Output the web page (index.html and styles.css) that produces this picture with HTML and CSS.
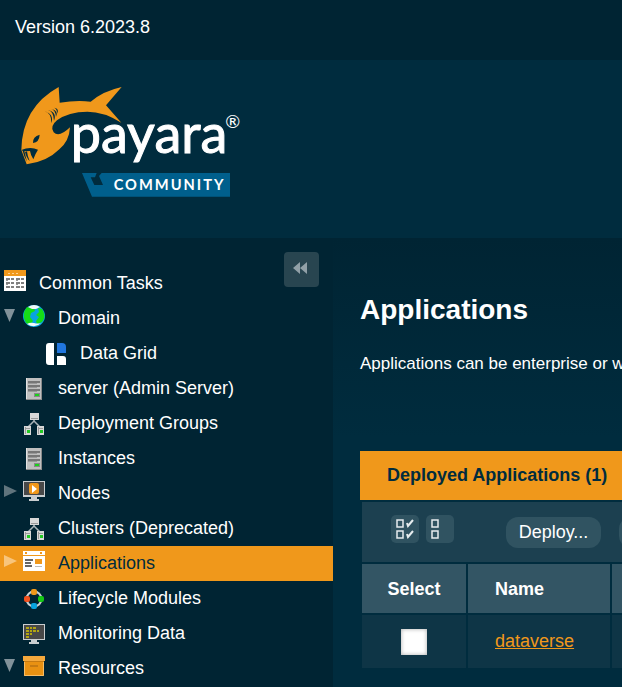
FILE: index.html
```html
<!DOCTYPE html>
<html lang="en">
<head>
<meta charset="utf-8">
<title>Payara Server Console</title>
<link rel="stylesheet" href="styles.css">
</head>
<body>
<svg class="defs" aria-hidden="true">
  <symbol id="server" viewBox="0 0 16 22">
    <path fill="#bfbfbf" d="M0 0h16v22H0z"/><path fill="#8a8a8a" d="M0 21h16v1H0zM15 0h1v22h-1z"/><path fill="#e2e2e2" d="M0 0h1v21H0z"/>
    <path stroke="#777" stroke-width="2" d="M2 4h12M2 8h12M2 12h12"/><path stroke="#999" d="M2 5.500h9M2 9.500h9M2 13.500h9"/>
    <path fill="#888" d="M8 15h6v4H8z"/><path fill="#19d219" d="M9 16h4v2H9z"/>
  </symbol>
  <symbol id="group" viewBox="0 0 20 22">
    <path fill="none" stroke="#aab4b8" stroke-width="1.500" d="M10 6v2L4 14M10 8l6 6"/>
    <path fill="#d8d8d8" d="M6 0h9v7H6zM0 13h7v9H0zM13 13h7v9h-7z"/>
    <path stroke="#999" d="M7 5.500h7M1 15.500h5M14 15.500h5M1.500 14v7M14.500 14v7"/><path fill="#22c922" d="M3 17h3v3H3zM16 17h3v3h-3z"/>
  </symbol>
  <symbol id="down" viewBox="0 0 11 13"><path fill="#81929a" d="M0 0h11L5.500 13z"/></symbol>
  <symbol id="right" viewBox="0 0 13 12"><path fill="currentColor" d="M0 0l13 6L0 12z"/></symbol>
</svg>
<header class="topbar">Version 6.2023.8</header>
<div class="brand">
  <svg class="logo" viewBox="60 42 666 342" role="img" aria-label="Payara Community">
    <path fill="#f0981b" d="M176 51L179 98Q230 90 272 95Q310 63 365 51L318 106L364 158Q312 125 262 125Q205 125 171 151Q148 170 161 187Q177 204 210 172Q208 213 178 238Q140 276 80 283L64 240Q66 112 176 51Z"/>
    <path fill="#002c3e" d="M99 219q-1-20 20-25q-1 22-20 25zM64 240q27-11 50-1q-7 10-14 29q-8-12-10-25l-17 1 8 31q-10-18-13-33z"/>
    <path fill="#002c3e" d="M75 247q5 18 14 26q-7-15-8-29zM133 124q22 4 21 36q9-28-21-36zM143 119q18 4 19 33q10-25-19-33zM153 116q14 4 15 25q9-20-15-25zM163 113q9 4 8 18q8-15-8-18z"/>
    <path fill="#005f8c" d="M246 309h44l-5 13h-13l11 23h26l-12-27 8-9h385v71H276z"/>
    <text class="wordmark" x="212" y="249">payara</text>
    <text class="reg" x="676" y="174">®</text>
    <text class="edition" x="341" y="360">COMMUNITY</text>
  </svg>
</div>
<div class="layout">
  <nav class="sidebar" aria-label="Tasks">
    <button class="collapse" type="button" aria-label="Collapse navigation"><svg width="15" height="12" viewBox="0 0 15 12"><path fill="#91a0a7" d="M7 0v12L0 6zM14 0v12L7 6z"/></svg></button>
    <ul class="tree">
      <li class="node root raised"><span class="icon"><svg width="22" height="21" viewBox="0 0 22 21"><path fill="#fff" d="M0 0h22v21H0z"/><path fill="#f0981b" d="M0 0h22v6H0z"/><path stroke="#ffd391" stroke-dasharray="2 2" d="M4 3.500h10"/><path stroke="#555" stroke-width="1.500" stroke-dasharray="4 1 3 2" d="M2 9h18M2 13h18M2 17h18"/><path stroke="#999" d="M2 10.500h2M12 10.500h2M2 14.500h2M12 14.500h2"/></svg></span><a href="#">Common Tasks</a></li>
      <li class="node raised"><span class="toggle"><svg width="11" height="13"><use href="#down"/></svg></span><span class="icon"><svg width="22" height="22" viewBox="0 0 22 22"><circle cx="11" cy="11" r="11" fill="#08a4df"/><path fill="#16dc16" d="M4 2l7 1 1 3-4 2-1 4 3 4-3 4-4-2Q-2 9 4 2zM15 3l4 1q5 7 0 13l-5 2-1-3 3-4-3-2 3-3z"/><path fill="#f1f8fa" d="M5 2q6-4 12 0l-4 2H9zM4 19q3-2 7-1t7 0q-6 6-14 1z"/></svg></span><a href="#">Domain</a></li>
      <li class="node child"><span class="icon"><svg width="20" height="22" viewBox="0 0 20 22"><path fill="#fff" d="M3 0h5v22H3q-3 0-3-3V3q0-3 3-3zM11 13h6q3 0 3 3v6h-9z"/><path fill="#2176de" d="M11 0h5q4 0 4 4v6h-9z"/></svg></span><a href="#">Data Grid</a></li>
      <li class="node leaf"><span class="icon"><svg width="16" height="22"><use href="#server"/></svg></span><a href="#">server (Admin Server)</a></li>
      <li class="node leaf"><span class="icon"><svg width="20" height="22"><use href="#group"/></svg></span><a href="#">Deployment Groups</a></li>
      <li class="node leaf"><span class="icon"><svg width="16" height="22"><use href="#server"/></svg></span><a href="#">Instances</a></li>
      <li class="node raised"><span class="toggle"><svg width="13" height="12"><use href="#right"/></svg></span><span class="icon"><svg width="22" height="20" viewBox="0 0 22 20"><path fill="#c9cdcf" d="M0 0h22v16H0zM8 16h6v2h2v2H6v-2h2z"/><path fill="#484848" d="M1 1h20v13H1z"/><path fill="#f0981b" d="M8 2h6q2 0 2 2v7q0 2-2 2H8q-2 0-2-2V4q0-2 2-2z"/><path fill="#fff" d="M9 4l5 4-5 4z"/></svg></span><a href="#">Nodes</a></li>
      <li class="node leaf"><span class="icon"><svg width="20" height="22"><use href="#group"/></svg></span><a href="#">Clusters (Deprecated)</a></li>
      <li class="node raised selected"><span class="toggle"><svg width="13" height="12"><use href="#right"/></svg></span><span class="icon"><svg width="22" height="20" viewBox="0 0 22 20"><path fill="#fff" d="M0 0h22v20H0z"/><path fill="#f0981b" d="M0 4h22v1H0zM2 1h2v2H2zM17 1h2v2h-2zM12 8h7v5h-7z"/><path stroke="#666" stroke-width="2" d="M2 9h8M2 12h6M2 15h7"/><path stroke="#bbb" d="M12 15.500h7"/></svg></span><a href="#" aria-current="page">Applications</a></li>
      <li class="node leaf"><span class="icon"><svg width="22" height="20" viewBox="0 0 22 20"><circle cx="11" cy="10" r="7.500" fill="none" stroke="#c8d0d3" stroke-width="2"/><rect x="8" width="6" height="6" rx="2" fill="#f0981b"/><rect x="1" y="7" width="6" height="6" rx="2" fill="#f4511e"/><rect x="15" y="7" width="6" height="6" rx="2" fill="#16c916"/><rect x="8" y="14" width="6" height="6" rx="2" fill="#08a4df"/></svg></span><a href="#">Lifecycle Modules</a></li>
      <li class="node leaf"><span class="icon"><svg width="22" height="20" viewBox="0 0 22 20"><path fill="#c9cdcf" d="M0 0h22v16H0zM8 16h6v2h2v2H6v-2h2z"/><path fill="#484848" d="M1 1h20v14H1z"/><path stroke="#d5c400" stroke-width="1.500" stroke-dasharray="3 1 2 1" d="M3 4h11M3 7h13M3 10h6M3 13h3"/></svg></span><a href="#">Monitoring Data</a></li>
      <li class="node raised"><span class="toggle"><svg width="11" height="13"><use href="#down"/></svg></span><span class="icon"><svg width="22" height="20" viewBox="0 0 22 20"><path fill="#f5a83c" d="M0 0h22v5H0z"/><path fill="#e99112" d="M1 5h20v15H1z"/><path fill="#c67a12" d="M1 5h20v1H1zM7 9h8v2H7z"/><path fill="none" stroke="#f8bd66" d="M1.500 6v13.500h19V6"/></svg></span><a href="#">Resources</a></li>
    </ul>
  </nav>
  <main class="content">
    <h1>Applications</h1>
    <p class="intro">Applications can be enterprise or w</p>
    <table class="apps">
      <caption>Deployed Applications (1)</caption>
      <colgroup><col class="col-select"><col class="col-name"><col></colgroup>
      <tbody>
        <tr class="tools"><td colspan="3"><div class="toolbar">
          <button class="mini" type="button" aria-label="Select all"><svg width="18" height="20" viewBox="0 0 18 20"><path fill="none" stroke="#e6ecee" stroke-width="1.500" d="M1 1h6v7H1zM1 12h6v7H1z"/><path fill="none" stroke="#e6ecee" stroke-width="2" d="M11 4l1 3 5-6M11 15l1 3 5-6"/></svg></button>
          <button class="mini" type="button" aria-label="Deselect all"><svg width="18" height="20" viewBox="0 0 18 20"><path fill="none" stroke="#e6ecee" stroke-width="1.500" d="M1 1h6v7H1zM1 12h6v7H1z"/></svg></button>
          <button class="action" type="button">Deploy...</button>
          <button class="action next" type="button" aria-label="Undeploy"></button>
        </div></td></tr>
        <tr class="heads"><th scope="col">Select</th><th scope="col">Name</th><th></th></tr>
        <tr class="row"><td><input class="check" type="checkbox" aria-label="Select dataverse"></td><td><a href="#">dataverse</a></td><td></td></tr>
      </tbody>
    </table>
  </main>
</div>
</body>
</html>
```
FILE: styles.css
```css
* { box-sizing: border-box; }
body {
  margin: 0;
  min-height: 100vh;
  display: flex;
  flex-direction: column;
  background: #002433;
  color: #fff;
  font: 18px/20px "Liberation Sans", Arial, sans-serif;
  overflow-x: hidden;
}
.defs { display: none; }
button { border: 0; padding: 0; color: inherit; font: inherit; cursor: pointer; }
.topbar { padding: 17px 15px 23px; }
.brand { padding: 24px 20px 40px; background: #002c3e; }
.logo { display: block; width: 222px; height: 114px; }
.wordmark { font: 162px Lato, sans-serif; fill: #fff; stroke: #fff; stroke-width: 3px; }
.reg { font: 54px Lato, sans-serif; fill: #fff; }
.edition { font: bold 44px Lato, sans-serif; letter-spacing: 6px; fill: #fff; }

.layout { flex: 1; display: flex; }
.sidebar { position: relative; flex: 0 0 333px; padding-top: 28px; }
.collapse {
  position: absolute;
  top: 14px;
  right: 14px;
  width: 35px;
  height: 35px;
  display: grid;
  place-items: center;
  padding: 0 2px 3px 0;
  border-radius: 4px;
  background: #284550;
}
.tree { margin: 0; padding: 0; list-style: none; }
.node { display: flex; align-items: center; height: 35px; padding-left: 4px; }
.node a { padding-bottom: 2px; color: inherit; text-decoration: none; }
.toggle { display: flex; width: 19px; color: #60747d; }
.icon { display: flex; justify-content: center; width: 22px; margin-right: 13px; }
.raised .toggle, .raised .icon { margin-bottom: 6px; }
.leaf { padding-left: 23px; }
.child { padding-left: 45px; }
.selected { background: #f0981b; color: #002c3e; }
.selected .toggle { color: #f8c57c; }

.content {
  flex: 1;
  min-width: 0;
  overflow: hidden;
  padding: 55px 0 19px 27px;
  background: linear-gradient(#002433, #002c3e 200px);
}
h1 { margin: 0; font-size: 28px; line-height: 34px; }
.intro { margin: 27px 0 77px; font-size: 17px; white-space: nowrap; }
.apps { width: calc(100% + 2px); table-layout: fixed; border-spacing: 2px; }
.apps caption {
  height: 49px;
  padding-left: 27px;
  background: #f0981b;
  color: #002c3e;
  font-weight: bold;
  line-height: 49px;
  text-align: left;
  white-space: nowrap;
}
.apps td, .apps th { padding: 0; text-align: left; }
.col-select { width: 104px; }
.col-name { width: 142px; }
.tools td { height: 60px; background: #1c4050; overflow: hidden; }
.toolbar { display: flex; align-items: center; gap: 7px; padding-left: 29px; }
.mini {
  flex: none;
  width: 28px;
  height: 28px;
  display: grid;
  place-items: center;
  margin-bottom: 6px;
  padding-right: 1px;
  border-radius: 5px;
  background: #305361;
}
.action { flex: none; width: 95px; height: 31px; margin-left: 45px; border-radius: 12px; background: #305361; }
.action.next { margin-left: 11px; }
.apps th { height: 49px; padding-left: 27px; background: #335564; }
.apps th:first-child { padding-left: 0; text-align: center; }
.row td { height: 53px; padding: 0 0 2px 27px; background: #0e3546; }
.row td:first-child { padding: 0; text-align: center; }
.row a { color: #f0981b; }
.check {
  appearance: none;
  display: inline-block;
  width: 26px;
  height: 26px;
  margin: 0;
  vertical-align: middle;
  background: #fff;
  box-shadow: inset 0 0 4px #aaa;
}
```
